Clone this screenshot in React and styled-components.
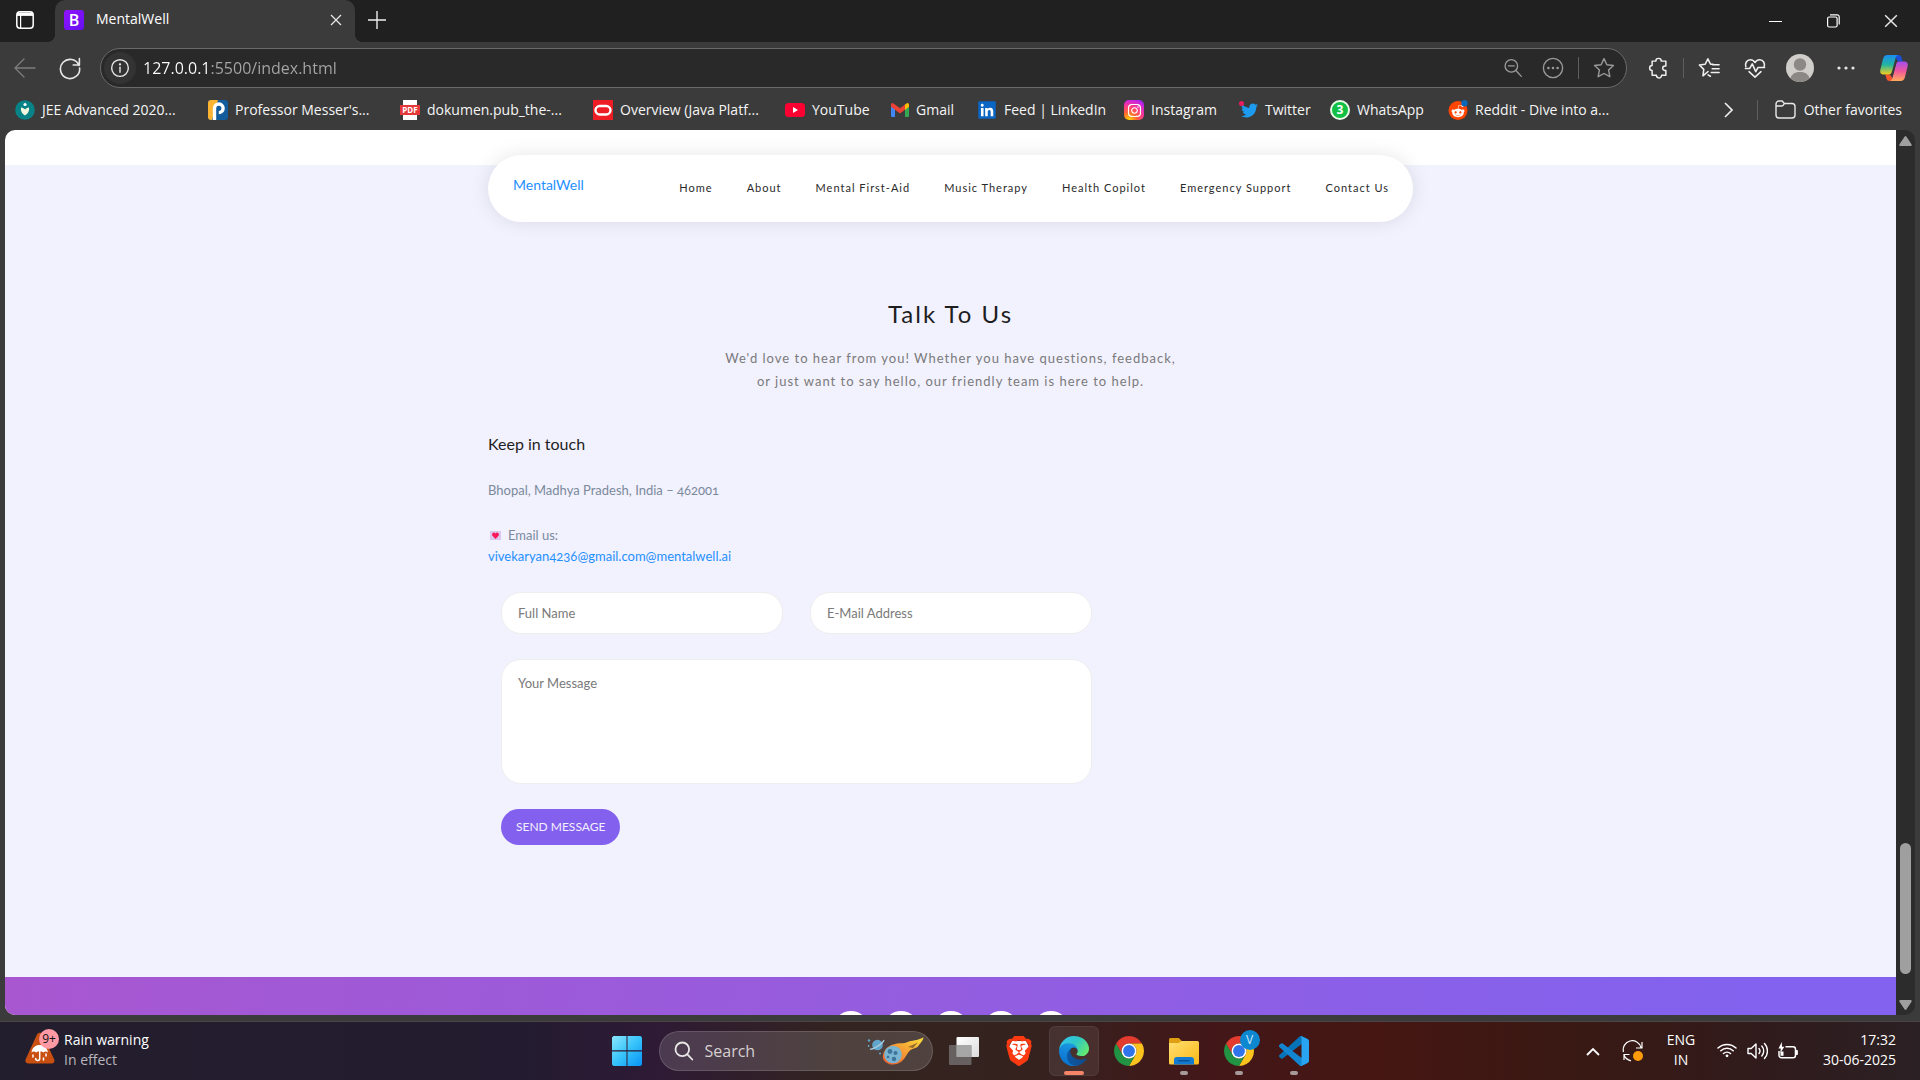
import React from "react";
import styled, { createGlobalStyle, css } from "styled-components";
import { SiBrave } from "react-icons/si";
import { FaTwitter, FaLinkedin, FaInstagram, FaRedditAlien } from "react-icons/fa";

const ui = `"Open Sans", "Noto Sans", sans-serif`;
const site = `Lato, "Open Sans", sans-serif`;

const GlobalStyle = createGlobalStyle`
  *, *::before, *::after { box-sizing: border-box; }
  body { margin: 0; background: #3b3b3b; font-family: ${ui}; }
  button { border: 0; padding: 0; background: none; color: inherit; font: inherit; cursor: pointer; }
  a { text-decoration: none; }
  h1, h2, h3, p, ul { margin: 0; padding: 0; font-weight: 400; list-style: none; }
  svg { display: block; flex: none; }
`;

const Desktop = styled.div`
  display: flex;
  flex-direction: column;
  height: 100vh;
  overflow: hidden;
`;

/* ---------- Browser chrome ---------- */

const TitleBar = styled.header`
  display: flex;
  align-items: flex-start;
  height: 42px;
  background: #202020;
  color: #fff;
`;

const TabActions = styled.button`
  display: grid;
  place-items: center;
  width: 55px;
  height: 40px;
  padding-right: 5px;
`;

const Tab = styled.div`
  display: flex;
  align-items: center;
  gap: 12px;
  width: 300px;
  height: 42px;
  padding: 0 9px 2px 9px;
  background: #3b3b3b;
  border-radius: 10px 10px 0 0;
  font-size: 14px;
  line-height: 20px;
  position: relative;

  &::before,
  &::after {
    content: "";
    position: absolute;
    bottom: 0;
    width: 8px;
    height: 8px;
  }
  &::before {
    right: 100%;
    background: radial-gradient(circle at 0 0, #202020 8px, #3b3b3b 8px);
  }
  &::after {
    left: 100%;
    background: radial-gradient(circle at 100% 0, #202020 8px, #3b3b3b 8px);
  }
`;

const Favicon = styled.span`
  display: grid;
  place-items: center;
  width: 20px;
  height: 20px;
  border-radius: 3px;
  background: linear-gradient(135deg, #9013fe, #6610f2);
  color: #fff;
  font: 600 16px/20px ${ui};
`;

const TabTitle = styled.span`
  flex: 1;
  padding-bottom: 2px;
`;

const IconButton = styled.button`
  display: grid;
  place-items: center;
  width: ${(p) => p.$w || 20}px;
  height: ${(p) => p.$h || 28}px;
  color: ${(p) => p.$color || "#e6e6e6"};
`;

const WindowControls = styled.div`
  display: flex;
  margin-left: auto;
`;

const Toolbar = styled.div`
  display: flex;
  align-items: center;
  height: 52px;
  padding: 0 2px 0 11px;
  background: #3b3b3b;
`;

const AddressBar = styled.form`
  display: flex;
  align-items: center;
  flex: 1;
  height: 40px;
  margin-right: 8px;
  padding: 0 2px 0 3px;
  border: 1px solid #6a6a6a;
  border-radius: 20px;
  background: #292929;
`;

const SiteInfo = styled.button`
  display: grid;
  place-items: center;
  width: 32px;
  height: 32px;
  border-radius: 50%;
  background: #333;
  color: #e6e6e6;
`;

const Url = styled.input`
  flex: 1;
  min-width: 0;
  margin-left: 7px;
  padding: 0;
  border: 0;
  outline: 0;
  font: 16px/24px ${ui};
  color: transparent;
  background: linear-gradient(90deg, #fff 67px, #a6a6a6 67px);
  background-clip: text;
  -webkit-background-clip: text;
`;

const Divider = styled.span`
  width: 1px;
  height: ${(p) => p.$h || 20}px;
  margin: 0 ${(p) => p.$m || 0}px;
  background: #5e5e5e;
`;

const Avatar = styled.button`
  width: 28px;
  height: 28px;
  margin: 0 8px 0 10px;
`;

const Bookmarks = styled.nav`
  display: flex;
  align-items: center;
  height: 36px;
  padding: 0 18px 4px 15px;
  background: #3b3b3b;
  color: #f5f5f5;
  font-size: 14px;
  line-height: 20px;
`;

const BookmarkList = styled.ul`
  display: flex;
  flex: 1;
  min-width: 0;
  gap: 21px;
`;

const Bookmark = styled.a`
  display: flex;
  align-items: center;
  gap: 7px;
  width: ${(p) => p.$w}px;
  color: inherit;
  white-space: nowrap;
`;

const Badge = styled.span`
  display: grid;
  place-items: center;
  width: 20px;
  height: 20px;
  flex: none;
  border-radius: ${(p) => p.$r || "3px"};
  border: ${(p) => p.$ring || 0};
  background: ${(p) => p.$bg};
  color: #fff;
  font-weight: 700;
  font-size: 12px;
  line-height: 1;
`;

const LinkedInMark = styled(FaLinkedin)`
  width: 20px;
  height: 20px;
  color: #0a66c2;
  background: linear-gradient(#fff, #fff) center / 14px 14px no-repeat;
`;

const PdfIcon = styled.span`
  display: grid;
  align-items: center;
  width: 20px;
  height: 20px;
  flex: none;
  background: linear-gradient(#fff, #fff) center / 14px 20px no-repeat;
  span {
    background: #e5383b;
    color: #fff;
    font: 700 8px/10px ${ui};
    text-align: center;
  }
`;

const OtherFavorites = styled.a`
  display: flex;
  align-items: center;
  gap: 8px;
  padding-left: 9px;
  color: inherit;
`;

/* ---------- Page viewport ---------- */

const Viewport = styled.div`
  display: flex;
  flex: 1;
  min-height: 0;
  margin: 0 5px 6px;
  border-radius: 10px;
  overflow: hidden;
  background: #2c2c2c;
`;

const Page = styled.div`
  flex: 1;
  min-width: 0;
  position: relative;
  overflow: hidden;
  background: #fff;
  font-family: ${site};
  font-size: 14px;
`;

const SiteHeader = styled.header`
  position: absolute;
  top: 25px;
  left: 0;
  right: 0;
  display: flex;
  align-items: center;
  justify-content: space-between;
  width: 925px;
  height: 67px;
  margin: 0 auto;
  padding: 0 24px 2px 25px;
  border-radius: 34px;
  background: #fff;
  box-shadow: 0 0 20px rgba(0, 0, 0, 0.1);
`;

const Brand = styled.a`
  padding-bottom: 6px;
  color: #1e90ff;
  font-size: 14px;
  line-height: 20px;
`;

const Menu = styled.ul`
  display: flex;
  gap: 34px;
`;

const MenuLink = styled.a`
  color: #2a2a2a;
  font-size: 11px;
  line-height: 20px;
  letter-spacing: 1px;
`;

const Contact = styled.main`
  margin-top: 35px;
  padding: 132px 0;
  background: #f2f1fe;
`;

const Container = styled.div`
  width: 925px;
  margin: 0 auto;
`;

const Intro = styled.div`
  text-align: center;
  h2 {
    color: #1e1e1e;
    font-size: 24px;
    line-height: 34px;
    letter-spacing: 2px;
  }
  p {
    margin-top: 16px;
    color: #7a7a7a;
    font-size: 13px;
    line-height: 23px;
    letter-spacing: 1px;
  }
`;

const Details = styled.div`
  margin-top: 39px;
  color: #7a8a9c;
  font-size: 13px;
  line-height: 21px;
  h3 {
    color: #1e1e1e;
    font-size: 16px;
    line-height: 24px;
  }
  p {
    margin-top: 24px;
    font-variant-numeric: oldstyle-nums;
  }
  a {
    color: #1e90ff;
  }
`;

const MailLine = styled.span`
  display: flex;
  align-items: center;
  gap: 7px;
  padding-left: 2px;
`;

const Form = styled.form`
  display: grid;
  grid-template-columns: 1fr 1fr;
  gap: 25px 27px;
  width: 591px;
  margin: 25px 0 0 13px;
`;

const fieldStyle = css`
  width: 100%;
  border: 1px solid #eee;
  border-radius: 20px;
  outline: 0;
  background: #fff;
  color: #333;
  font: 13px/18px ${site};
  &::placeholder {
    color: #7a7a7a;
    opacity: 1;
  }
`;

const Field = styled.input`
  ${fieldStyle}
  height: 42px;
  padding: 0 16px;
`;

const Message = styled.textarea`
  ${fieldStyle}
  grid-column: 1 / -1;
  display: block;
  height: 125px;
  padding: 14px 16px;
  resize: none;
`;

const Submit = styled.button`
  justify-self: start;
  height: 36px;
  padding: 0 15px 2px;
  border-radius: 18px;
  background: #8360ee;
  color: #f3effd;
  font-size: 12px;
  text-transform: uppercase;
`;

const Footer = styled.footer`
  display: flex;
  justify-content: center;
  gap: 14px;
  padding: 34px 0;
  background: linear-gradient(100deg, #a857d0 0%, #8262ee 92%);
`;

const SocialLink = styled.a`
  width: 36px;
  height: 36px;
  border-radius: 50%;
  background: #fff;
`;

const Scrollbar = styled.div`
  display: flex;
  flex-direction: column;
  align-items: center;
  width: 19px;
  padding: 6px 0 5px;
`;

const Thumb = styled.div`
  width: 11px;
  height: 131px;
  margin: auto 0 26px;
  border-radius: 6px;
  background: #9f9f9f;
`;

/* ---------- Taskbar ---------- */

const Taskbar = styled.footer`
  display: grid;
  grid-template-columns: 1fr auto 1fr;
  align-items: center;
  height: 59px;
  border-top: 1px solid #4b4446;
  background: linear-gradient(
    90deg,
    #231e2d 0%,
    #231c30 27%,
    #2e1a35 34%,
    #33241f 44%,
    #35221f 54%,
    #431719 63%,
    #451612 72%,
    #381914 83%,
    #301b1c 92%,
    #2b2024 100%
  );
  color: #fff;
  font-size: 14px;
  line-height: 20px;
`;

const Weather = styled.button`
  display: flex;
  align-items: center;
  gap: 6px;
  padding: 0 0 2px 25px;
  justify-self: start;
  text-align: left;
  small {
    display: block;
    color: #b9b6bb;
    font-size: 14px;
  }
`;

const WeatherIcon = styled.span`
  position: relative;
  width: 33px;
  height: 36px;
  padding-top: 2px;
  margin-bottom: 6px;
`;

const Count = styled.span`
  position: absolute;
  top: 0;
  right: -1px;
  width: 20px;
  height: 20px;
  border-radius: 50%;
  background: #ff99a4;
  color: #111;
  font-size: 12px;
  text-align: center;
`;

const Apps = styled.div`
  display: flex;
  align-items: center;
  gap: 5px;
`;

const AppButton = styled.button`
  position: relative;
  display: grid;
  place-items: center;
  width: 50px;
  height: 50px;
  border-radius: 6px;
  ${(p) =>
    p.$active &&
    css`
      background: rgba(255, 255, 255, 0.08);
      box-shadow: inset 0 0 0 1px rgba(255, 255, 255, 0.06);
    `}
  &::after {
    content: "";
    display: ${(p) => (p.$active || p.$open ? "block" : "none")};
    position: absolute;
    bottom: 1px;
    width: ${(p) => (p.$active ? 20 : 8)}px;
    height: 4px;
    border-radius: 2px;
    background: ${(p) => (p.$active ? "#f58469" : "#a79a9b")};
  }
`;

const ProfileBadge = styled.span`
  position: absolute;
  top: 4px;
  right: 4px;
  width: 20px;
  height: 20px;
  border-radius: 50%;
  background: #0d87cf;
  color: #cfe9fb;
  font-size: 12px;
  text-align: center;
`;

const SearchBox = styled.label`
  display: flex;
  align-items: center;
  width: 274px;
  height: 40px;
  margin: 0 1px 0 2px;
  padding: 0 8px 0 14px;
  border: 1px solid rgba(255, 255, 255, 0.14);
  border-radius: 20px;
  background: rgba(255, 255, 255, 0.14);
  input {
    flex: 1;
    min-width: 0;
    margin-left: 11px;
    padding: 0;
    border: 0;
    outline: 0;
    background: none;
    color: #fff;
    font: 16px/24px ${ui};
  }
  input::placeholder {
    color: #d6d0d1;
    opacity: 1;
  }
`;

const Tray = styled.div`
  display: flex;
  align-items: center;
  justify-self: end;
  padding-right: 24px;
`;

const Language = styled.button`
  width: 40px;
  margin: 0 16px 0 8px;
  padding-bottom: 2px;
  text-align: center;
`;

const Status = styled.button`
  display: flex;
  gap: 10px;
`;

const Clock = styled.button`
  width: 98px;
  padding-bottom: 2px;
  text-align: right;
  white-space: nowrap;
`;

/* ---------- Drawings ---------- */

const Line = ({ s = 24, w = 1.5, children }) => (
  <svg width={s} height={s} viewBox="0 0 24 24" fill="none" stroke="currentColor" strokeWidth={w} strokeLinecap="round" strokeLinejoin="round">
    {children}
  </svg>
);

const TabActionsIcon = () => (
  <svg width="20" height="20" viewBox="0 0 20 20" fill="none" stroke="#fff" strokeWidth="1.5">
    <rect x="1.8" y="1.8" width="16.4" height="16.4" rx="3.2" />
    <path d="M2 4.2h16" strokeWidth="3.4" />
    <path d="M5.6 5v13" strokeWidth="1.2" />
  </svg>
);
const CloseIcon = ({ s = 12 }) => (
  <svg width={s} height={s} viewBox="0 0 12 12" stroke="currentColor" strokeWidth="1.3"><path d="M1 1l10 10M11 1L1 11" /></svg>
);
const PlusIcon = () => (
  <svg width="18" height="18" viewBox="0 0 18 18" stroke="#eee" strokeWidth="1.4"><path d="M9 0v18M0 9h18" /></svg>
);
const BackIcon = () => <Line s={24} w={1.3}><path d="M22 12H2.5M11 3l-9 9 9 9" /></Line>;
const ReloadIcon = () => <Line s={24} w={1.6}><path d="M21 9.5A9.6 9.6 0 1 0 21.6 12M21.4 2.6V9h-6.2" /></Line>;
const InfoIcon = () => (
  <Line s={20} w={1.7}><circle cx="12" cy="12" r="10" /><path d="M12 11v6" /><circle cx="12" cy="7.6" r=".6" fill="currentColor" /></Line>
);
const ZoomOutIcon = () => <Line s={20} w={1.6}><circle cx="10" cy="9.5" r="7.5" /><path d="M15.5 15l6.5 7M6.5 9.5h7" /></Line>;
const DotsCircleIcon = () => (
  <Line s={22} w={1.5}><circle cx="12" cy="12" r="10.5" /><g fill="currentColor" stroke="none"><circle cx="7" cy="12" r="1.4" /><circle cx="12" cy="12" r="1.4" /><circle cx="17" cy="12" r="1.4" /></g></Line>
);
const StarIcon = () => <Line s={22} w={1.5}><path d="M12 1.8l3.1 6.6 7.2.9-5.3 5 1.4 7.2L12 18l-6.400 3.500L7 14.300l-5.300-5 7.200-.9z" /></Line>;
const PuzzleIcon = () => (
  <Line s={22} w={1.6}><path d="M8.500 4.500a3 3 0 0 1 6 0H19.500V9.700h-1a2.500 2.500 0 0 0 0 5H19.500V20h-4.700a2.800 2.800 0 0 1-5.600 0H4.500v-5.300a2.700 2.700 0 0 1 0-5.400V4.500z" /></Line>
);
const FavoritesIcon = () => (
  <Line s={22} w={1.7}><path d="M11 15.800l-5.600 4.700.9-7L1.500 8.800l6.300-.9L10.800 2l2.900 5.900h2.800M16 8.500h7M15.500 12.800h7.500M14.500 17h8.500M13.500 21l-2.500-1.500" /></Line>
);
const HeartIcon = () => (
  <Line s={22} w={1.7}><path d="M2 10.500C.8 7 3 3 6.800 3 9.500 3 11 4.500 12 6c1-1.500 2.500-3 5.200-3C21 3 23.200 7 22 10.500M1.500 12.500h4.800l2.700-5 3.800 8.500 2.400-4.500h7.300M5.500 16l6.500 6 6.500-6" /></Line>
);
const MoreIcon = () => (
  <svg width="18" height="6" viewBox="0 0 18 6" fill="#e6e6e6"><circle cx="2" cy="3" r="1.600" /><circle cx="9" cy="3" r="1.600" /><circle cx="16" cy="3" r="1.600" /></svg>
);
const AvatarIcon = () => (
  <svg width="28" height="28" viewBox="0 0 28 28">
    <circle cx="14" cy="14" r="14" fill="#d0cecb" />
    <circle cx="14" cy="10.500" r="6.200" fill="#8b8885" />
    <path d="M4.500 24.200C6 19.500 9.500 18 14 18s8 1.500 9.500 6.200A14 14 0 0 1 4.500 24.200z" fill="#8b8885" />
  </svg>
);
const CopilotIcon = () => (
  <svg width="28" height="28" viewBox="0 0 28 28">
    <defs>
      <linearGradient id="cpA" x1="0" y1="0" x2="0" y2="1"><stop offset="0" stopColor="#1b8df2" /><stop offset=".5" stopColor="#21b5a0" /><stop offset="1" stopColor="#f5d01c" /></linearGradient>
      <linearGradient id="cpB" x1="0" y1="0" x2="0" y2="1"><stop offset="0" stopColor="#a44df0" /><stop offset=".5" stopColor="#f0589a" /><stop offset="1" stopColor="#ffab5c" /></linearGradient>
    </defs>
    <path d="M14 1h4.500c2 0 2.700 1.300 3.200 3l1 3.500H18z" fill="#1c4fd6" />
    <path d="M14 27H9.500c-2 0-2.700-1.300-3.200-3l-1-3.500H10z" fill="#f4552d" />
    <path d="M7.500 1H18c-1.500.5-2.200 2-2.700 4l-3.500 13c-.6 1.700-1.500 2.500-3.300 2.500H3.500C.8 20.500-.3 18.500.4 15.500L3 5C3.700 2.300 5 1 7.500 1z" fill="url(#cpA)" />
    <path d="M20.500 27H10c1.500-.5 2.200-2 2.700-4l3.500-13c.6-1.700 1.500-2.500 3.300-2.500h5c2.700 0 3.800 2 3.100 5L25 23c-.7 2.700-2 4-4.500 4z" fill="url(#cpB)" />
    <path d="M16 10l-3 11h-1.200l3-11z" fill="#3b3b3b" />
  </svg>
);
const OracleIcon = () => (
  <svg width="20" height="20" viewBox="0 0 20 20"><rect width="20" height="20" fill="#ee1c24" /><rect x="2.500" y="6" width="15" height="8.500" rx="4.250" fill="none" stroke="#fff" strokeWidth="2.400" /></svg>
);
const JeeIcon = () => (
  <svg width="20" height="20" viewBox="0 0 20 20"><circle cx="10" cy="10" r="9.800" fill="#078287" /><circle cx="10" cy="4.500" r="1.600" fill="#fff" /><path d="M6 7.500c2 .3 3 .8 4 2 1-1.200 2-1.700 4-2 .5 4-1.200 6-4 8-2.800-2-4.500-4-4-8z" fill="#f3f6df" /></svg>
);
const ProfessorIcon = () => (
  <svg width="20" height="20" viewBox="0 0 20 20">
    <rect width="20" height="20" rx="3" fill="#125c9e" /><path d="M3 0h7L4 20H3a3 3 0 0 1-3-3V3a3 3 0 0 1 3-3z" fill="#fbb331" />
    <path d="M6.500 20V8a4.300 4.300 0 1 1 4.300 4.600" fill="none" stroke="#fff" strokeWidth="3.400" />
  </svg>
);
const YoutubeIcon = () => (
  <svg width="20" height="14" viewBox="0 0 20 14"><rect width="20" height="14" rx="3.500" fill="#ff0033" /><path d="M8 4l5 3-5 3z" fill="#fff" /></svg>
);
const GmailIcon = () => (
  <svg width="18" height="14" viewBox="0 0 18 14"><path d="M0 2v11a1 1 0 0 0 1 1h3V5z" fill="#4285f4" /><path d="M18 2v11a1 1 0 0 1-1 1h-3V5z" fill="#34a853" /><path d="M14 1.500L16 .3c1-.6 2 .2 2 1.500v2L14 7z" fill="#fbbc04" /><path d="M4 1.500L2 .3C1-.3 0 .5 0 1.800v2L9 10.500l5-3.700V1.500L9 5.300z" fill="#ea4335" /></svg>
);
const TwitterIcon = () => (
  <svg width="19" height="20" viewBox="0 0 19 20"><FaTwitter x="2" y="2" size={17} color="#1d9bf0" /><circle cx="2.500" cy="3.500" r="2.500" fill="#e81c62" /></svg>
);
const RedditIcon = () => (
  <svg width="20" height="20" viewBox="0 0 20 20"><circle cx="10" cy="10.500" r="9.500" fill="#ff4500" /><FaRedditAlien x="3" y="4" size={14} color="#fff" /><circle cx="16.500" cy="3.200" r="3.200" fill="#0b66b8" /></svg>
);
const FolderIcon = () => (
  <svg width="21" height="20" viewBox="0 0 21 20" fill="none" stroke="#e8e8e8" strokeWidth="1.400"><path d="M1 6V4a3 3 0 0 1 3-3h3.200l2.200 2.500H17a3 3 0 0 1 3 3V15a3 3 0 0 1-3 3H4a3 3 0 0 1-3-3zM1 6h5.800c1.200 0 1.400-.6 2.600-2.500" /></svg>
);
const LoveLetterIcon = () => (
  <svg width="11" height="9" viewBox="0 0 11 9"><rect width="11" height="9" fill="#dcc8ef" /><path d="M5.500 8L2.200 4.500C1.300 2.500 4 .3 5.500 2.500 7 .3 9.700 2.500 8.800 4.500z" fill="#f8185b" /></svg>
);
const RainIcon = () => (
  <svg width="30" height="33" viewBox="0 0 30 33">
    <path d="M12 3.500c1.300-2.300 4.300-2.300 5.500 0L29 28c1.200 2.500 0 4.500-2.500 4.500h-23C.8 32.500-.3 30.500.8 28z" fill="#c84f10" />
    <path d="M6.500 21.500c.5-5 4-7.500 8.200-7.500s7.700 2.500 8.200 7.500c-1.500-1.500-3.200-1.500-4.400 0-2.500-1.600-5-1.600-7.500 0-1.200-1.500-3-1.500-4.500 0z" fill="#fff" />
    <path d="M14.700 20v7.500a2 2 0 0 1-4 0M8 24v2M21 23v2M18.500 27v2" stroke="#fff" strokeWidth="1.500" fill="none" strokeLinecap="round" />
  </svg>
);
const WindowsIcon = () => (
  <svg width="30" height="30" viewBox="0 0 30 30">
    <defs><linearGradient id="win" x1="0" y1="0" x2="1" y2="1"><stop offset="0" stopColor="#8be6fd" /><stop offset=".5" stopColor="#37c3fa" /><stop offset="1" stopColor="#0793f5" /></linearGradient></defs>
    <path fill="url(#win)" d="M1.500 0h13v14.300H0V1.500zM15.500 0h13L30 1.500v12.800H15.500zM0 15.500h14.500V30h-13L0 28.500zM15.500 15.500H30v13L28.500 30h-13z" />
  </svg>
);
const SearchIcon = () => (
  <svg width="20" height="20" viewBox="0 0 20 20" fill="none" stroke="#e9e6e6" strokeWidth="1.800" strokeLinecap="round"><circle cx="8.300" cy="8.300" r="6.800" /><path d="M13.300 13.300l5 5.200" /></svg>
);
const CometIcon = () => (
  <svg width="57" height="28" viewBox="0 0 57 28">
    <defs><linearGradient id="cm" x1="0" y1="1" x2="1" y2="0"><stop offset="0" stopColor="#f0592c" /><stop offset=".5" stopColor="#f59c35" /><stop offset="1" stopColor="#fbe13a" /></linearGradient></defs>
    <circle cx="10.500" cy="8" r="5.300" fill="#62a5cc" /><path d="M3 12C5 13 16 7 17 3" stroke="#a8cde0" fill="none" strokeWidth="1.200" />
    <g fill="#62a5cc"><circle cx="2" cy="3.500" r="1.200" /><circle cx="1.600" cy="9" r=".9" /><circle cx="13" cy="16.500" r="1" /></g>
    <path d="M17 15c3-6 8-7.500 13-8.500 4-.8 7 .3 10-1.300 5-2.200 10-1 16.500-4.900-.5 4-4 6.500-5.500 9.200-1.500 1.700-5 1.700-7.500 3.500-3 2-4.500 8-9 11.500-5 4-12 4-16 .5-3-2.500-3.500-6-1.500-10z" fill="url(#cm)" />
    <path d="M41 10l10-4.500-5 5.500z" fill="#6c4a2b" opacity=".7" />
    <circle cx="26" cy="17.500" r="8.800" fill="#79b4d2" /><g fill="#3e7499"><circle cx="23" cy="14.500" r="2.400" /><circle cx="28.500" cy="16" r="2" /><circle cx="27" cy="22" r="2.200" /><circle cx="21" cy="20" r="1.300" /></g>
  </svg>
);
const TaskViewIcon = () => (
  <svg width="30" height="28" viewBox="0 0 30 28">
    <defs><linearGradient id="tv" x1="0" y1="0" x2="1" y2="1"><stop offset="0" stopColor="#fff" /><stop offset="1" stopColor="#dcdcdc" /></linearGradient></defs>
    <rect x="7.500" y="0" width="22.500" height="20" rx="1" fill="url(#tv)" /><rect x="0" y="8" width="22.500" height="20" rx="1" fill="#777" opacity=".75" />
    <rect x="7.500" y="8" width="15" height="12" fill="#aaa" opacity=".8" />
  </svg>
);
const BraveIcon = () => (
  <svg width="30" height="30" viewBox="0 0 30 30"><path d="M8 5h14l3 6-3 12-7 5-7-5-3-12z" fill="#fff" /><SiBrave size={30} color="#fb3a12" /></svg>
);
const EdgeIcon = () => (
  <svg width="30" height="30" viewBox="4.600 4.800 256 254">
    <defs>
      <linearGradient id="e1" x1="0" y1="0" x2="1" y2="0"><stop offset="0" stopColor="#0c59a4" /><stop offset="1" stopColor="#114a8b" /></linearGradient>
      <linearGradient id="e2" x1=".6" y1="0" x2=".3" y2="1"><stop offset="0" stopColor="#1b9de2" /><stop offset=".5" stopColor="#1383d9" /><stop offset="1" stopColor="#0570cc" /></linearGradient>
      <linearGradient id="e3" x1="0" y1=".2" x2="1" y2=".7"><stop offset="0" stopColor="#35c1f1" /><stop offset=".5" stopColor="#2fc8c4" /><stop offset="1" stopColor="#66eb6e" /></linearGradient>
    </defs>
    <path fill="url(#e1)" d="M235.680 195.460a93.730 93.730 0 0 1-10.540 4.710 101.870 101.870 0 0 1-35.900 6.460c-47.320 0-88.540-32.550-88.540-74.320A31.480 31.480 0 0 1 117.130 105c-42.800 1.800-53.800 46.400-53.800 72.530 0 73.880 68.090 81.370 82.760 81.370 7.910 0 19.840-2.300 27-4.560l1.310-.44a128.340 128.340 0 0 0 66.600-52.800 4 4 0 0 0-5.320-5.640z" />
    <path fill="url(#e2)" d="M110.340 246.340A79.200 79.200 0 0 1 87.600 225a80.720 80.720 0 0 1 29.530-120c3.120-1.470 8.450-4.130 15.540-4a32.350 32.350 0 0 1 25.690 13 31.880 31.880 0 0 1 6.360 18.660c0-.21 24.460-79.600-80-79.600-43.900 0-80 41.660-80 78.210a130.150 130.150 0 0 0 12.110 56 128 128 0 0 0 156.380 67.110 75.550 75.550 0 0 1-62.780-8z" />
    <path fill="url(#e3)" d="M156.940 153.780c-.81 1.050-3.300 2.500-3.300 5.660 0 2.610 1.700 5.120 4.720 7.230 14.380 10 41.490 8.680 41.560 8.680a59.560 59.560 0 0 0 30.270-8.350 61.380 61.380 0 0 0 30.430-52.880c.26-22.410-8-37.310-11.340-43.910C228.090 28.760 182.350 4.810 132.610 4.810a128 128 0 0 0-128 126.200c.48-36.540 36.800-66.050 80-66.050 3.500 0 23.460.34 42 10.070 16.340 8.580 24.900 18.940 30.850 29.210 6.180 10.670 7.280 24.150 7.280 29.520s-2.740 13.330-7.800 20.020z" />
  </svg>
);
const ChromeIcon = () => (
  <svg width="30" height="30" viewBox="0 0 48 48">
    <path fill="#e33b2e" d="M24 12H44.780A24 24 0 0 0 3.220 12L13.610 30A12 12 0 0 1 24 12z" />
    <path fill="#fcc31e" d="M34.390 30L24 48A24 24 0 0 0 44.780 12H24A12 12 0 0 1 34.390 30z" />
    <path fill="#229342" d="M13.610 30L3.220 12A24 24 0 0 0 24 48L34.390 30A12 12 0 0 1 13.610 30z" />
    <circle cx="24" cy="24" r="12" fill="#fff" /><circle cx="24" cy="24" r="9.500" fill="#2f74ea" />
  </svg>
);
const ExplorerIcon = () => (
  <svg width="30" height="27" viewBox="0 0 30 27">
    <defs><linearGradient id="fx" x1="0" y1="0" x2="1" y2="1"><stop offset="0" stopColor="#ffdf71" /><stop offset="1" stopColor="#fbb917" /></linearGradient></defs>
    <path d="M0 1.500A1.500 1.500 0 0 1 1.500 0h8.300l3 3v4H0z" fill="#e09f12" /><path d="M0 5h9.500l3-2h16A1.500 1.500 0 0 1 30 4.500V25a1.500 1.500 0 0 1-1.500 1.500h-27A1.500 1.500 0 0 1 0 25z" fill="url(#fx)" />
    <path d="M5 26.500V22a3 3 0 0 1 3-3h14a3 3 0 0 1 3 3v4.500z" fill="#117bd4" /><path d="M9.500 22.800h11" stroke="#0b4a87" strokeWidth="1.300" />
  </svg>
);
const CodeIcon = () => (
  <svg width="30" height="30" viewBox="0 0 100 100">
    <path fill="#0673b8" d="M96.460 10.800L75.860.88a6.200 6.200 0 0 0-7.100 1.200L1.300 63.600a4.170 4.170 0 0 0 0 6.160l5.500 5a4.160 4.160 0 0 0 5.300.24L93.360 13.300A4.130 4.130 0 0 1 100 16.670v-.24a6.250 6.250 0 0 0-3.540-5.630z" />
    <path fill="#1286d0" d="M96.460 89.200L75.860 99.120a6.230 6.230 0 0 1-7.100-1.200L1.300 36.400a4.170 4.170 0 0 1 0-6.160l5.500-5a4.160 4.160 0 0 1 5.300-.24L93.360 86.700A4.130 4.130 0 0 0 100 83.330v.24a6.250 6.250 0 0 1-3.540 5.630z" />
    <path fill="#28a4f0" d="M75.860 99.130a6.230 6.230 0 0 1-7.100-1.210A3.660 3.660 0 0 0 75 95.330V4.670a3.660 3.660 0 0 0-6.240-2.590 6.230 6.230 0 0 1 7.100-1.210l20.600 9.910A6.250 6.250 0 0 1 100 16.410v67.180a6.250 6.250 0 0 1-3.540 5.630z" />
  </svg>
);
const SyncIcon = () => (
  <svg width="22" height="22" viewBox="0 0 22 22" fill="none" stroke="#fff" strokeWidth="1.200"><path d="M1.500 12a9 9 0 0 1 17.500-4.500M20 2v6h-6M2 20v-5.500h5.500M2 14.800C3 18 5.500 20 9 20.800" /><circle cx="16" cy="16" r="5" fill="#ff9a0a" stroke="none" /></svg>
);
const WifiIcon = () => (
  <svg width="20" height="16" viewBox="0 0 20 16" fill="none" stroke="#fff" strokeWidth="1.500" strokeLinecap="round"><path d="M1 6a13 13 0 0 1 18 0M3.800 8.800a9 9 0 0 1 12.400 0M6.500 11.500a5.200 5.200 0 0 1 7 0" /><circle cx="10" cy="13.800" r="1.400" fill="#fff" stroke="none" /></svg>
);
const VolumeIcon = () => (
  <svg width="21" height="18" viewBox="0 0 21 18" fill="none" stroke="#fff" strokeWidth="1.400" strokeLinecap="round" strokeLinejoin="round"><path d="M1 6.500h3.200L9 2v14l-4.800-4.500H1zM12 6.500a4 4 0 0 1 0 5M14.800 4a7.500 7.500 0 0 1 0 10M17.500 1.500a11 11 0 0 1 0 15" /></svg>
);
const BatteryIcon = () => (
  <svg width="20" height="18" viewBox="0 0 20 18" fill="none" stroke="#fff" strokeWidth="1.500"><path d="M7.500 4.700H15a2.500 2.500 0 0 1 2.500 2.500v6a2.500 2.500 0 0 1-2.500 2.500H3.500A2.500 2.500 0 0 1 1 13.200V9" /><path d="M18 8.500h1.500v4H18z" fill="#fff" strokeWidth=".8" /><path d="M3.800 0L.5 6.500h2.300L2.300 11 6.300 4.800H4z" fill="#fff" stroke="none" /><path d="M2.500 9.500h3v4.300h-3z" fill="#fff" stroke="none" /></svg>
);

/* ---------- Data ---------- */

const bookmarks = [
  { label: "JEE Advanced 2020...", w: 172, icon: <JeeIcon /> },
  { label: "Professor Messer's...", w: 171, icon: <ProfessorIcon /> },
  { label: "dokumen.pub_the-...", w: 172, icon: <PdfIcon><span>PDF</span></PdfIcon> },
  { label: "Overview (Java Platf...", w: 171, icon: <OracleIcon /> },
  { label: "YouTube", w: 85, icon: <YoutubeIcon /> },
  { label: "Gmail", w: 65, icon: <GmailIcon /> },
  { label: "Feed | LinkedIn", w: 126, icon: <LinkedInMark /> },
  {
    label: "Instagram", w: 94,
    icon: <Badge $bg="radial-gradient(circle at 25% 100%, #ffd600 0%, #ff6930 30%, #fe3b88 55%, #c724e0 80%, #7a2bff 100%)" $r="5px"><FaInstagram size={15} /></Badge>,
  },
  { label: "Twitter", w: 70, icon: <TwitterIcon /> },
  { label: "WhatsApp", w: 97, icon: <Badge $bg="#11c044" $r="50%" $ring="2px solid #eafbe9">3</Badge> },
  { label: "Reddit - Dive into a...", w: 172, icon: <RedditIcon /> },
];

const menu = ["Home", "About", "Mental First-Aid", "Music Therapy", "Health Copilot", "Emergency Support", "Contact Us"];
const socials = ["Facebook", "Twitter", "LinkedIn", "Instagram", "YouTube"];

export default function App() {
  return (
    <Desktop>
      <GlobalStyle />
      <TitleBar>
        <TabActions aria-label="Tab actions"><TabActionsIcon /></TabActions>
        <Tab>
          <Favicon>B</Favicon>
          <TabTitle>MentalWell</TabTitle>
          <IconButton aria-label="Close tab"><CloseIcon /></IconButton>
        </Tab>
        <IconButton $w={44} $h={40} aria-label="New tab"><PlusIcon /></IconButton>
        <WindowControls>
          <IconButton $w={58} $h={42} aria-label="Minimize"><svg width="13" height="13" viewBox="0 0 13 13"><path d="M0 6.500h13" stroke="#fff" /></svg></IconButton>
          <IconButton $w={58} $h={42} aria-label="Restore">
            <svg width="13" height="14" viewBox="0 0 13 14" fill="none" stroke="#fff" strokeWidth="1.200"><rect x=".6" y="3" width="9.500" height="10" rx="1.500" /><path d="M3 .8h7a2 2 0 0 1 2.200 2.200v7.500" /></svg>
          </IconButton>
          <IconButton $w={58} $h={42} aria-label="Close"><CloseIcon s={14} /></IconButton>
        </WindowControls>
      </TitleBar>

      <Toolbar>
        <IconButton $w={28} $color="#7d7d7d" aria-label="Back"><BackIcon /></IconButton>
        <IconButton $w={61} aria-label="Reload"><ReloadIcon /></IconButton>
        <AddressBar>
          <SiteInfo type="button" aria-label="Site information"><InfoIcon /></SiteInfo>
          <Url aria-label="Address" defaultValue="127.0.0.1:5500/index.html" />
          <IconButton type="button" $w={40} $color="#9a9a9a" aria-label="Zoom out"><ZoomOutIcon /></IconButton>
          <IconButton type="button" $w={40} $color="#9a9a9a" aria-label="Site actions"><DotsCircleIcon /></IconButton>
          <Divider $h={22} $m={5} />
          <IconButton type="button" $w={40} $color="#9a9a9a" aria-label="Add to favorites"><StarIcon /></IconButton>
        </AddressBar>
        <IconButton $w={48} $color="#f0f0f0" aria-label="Extensions"><PuzzleIcon /></IconButton>
        <Divider />
        <IconButton $w={50} $color="#f0f0f0" aria-label="Favorites"><FavoritesIcon /></IconButton>
        <IconButton $w={42} $color="#f0f0f0" aria-label="Browser essentials"><HeartIcon /></IconButton>
        <Avatar aria-label="Profile"><AvatarIcon /></Avatar>
        <IconButton $w={48} aria-label="More"><MoreIcon /></IconButton>
        <IconButton $w={48} aria-label="Copilot"><CopilotIcon /></IconButton>
      </Toolbar>

      <Bookmarks>
        <BookmarkList>
          {bookmarks.map((b) => (
            <li key={b.label}><Bookmark href="#" $w={b.w}>{b.icon}{b.label}</Bookmark></li>
          ))}
        </BookmarkList>
        <IconButton $w={40} aria-label="More bookmarks"><svg width="9" height="16" viewBox="0 0 9 16" fill="none" stroke="#eee" strokeWidth="1.600"><path d="M1 1l7 7-7 7" /></svg></IconButton>
        <Divider $m={8} />
        <OtherFavorites href="#"><FolderIcon />Other favorites</OtherFavorites>
      </Bookmarks>

      <Viewport>
        <Page>
          <SiteHeader>
            <Brand href="#">MentalWell</Brand>
            <nav><Menu>{menu.map((m) => <li key={m}><MenuLink href="#">{m}</MenuLink></li>)}</Menu></nav>
          </SiteHeader>
          <Contact>
            <Container>
              <Intro>
                <h2>Talk To Us</h2>
                <p>We'd love to hear from you! Whether you have questions, feedback,<br />or just want to say hello, our friendly team is here to help.</p>
              </Intro>
              <Details>
                <h3>Keep in touch</h3>
                <p>Bhopal, Madhya Pradesh, India – 462001</p>
                <p>
                  <MailLine><LoveLetterIcon />Email us:</MailLine>
                  <a href="#">vivekaryan4236@gmail.com@mentalwell.ai</a>
                </p>
              </Details>
              <Form>
                <Field aria-label="Full Name" placeholder="Full Name" />
                <Field aria-label="E-Mail Address" type="email" placeholder="E-Mail Address" />
                <Message aria-label="Your Message" placeholder="Your Message" />
                <Submit type="button">Send Message</Submit>
              </Form>
            </Container>
          </Contact>
          <Footer>{socials.map((s) => <SocialLink key={s} href="#" aria-label={s} />)}</Footer>
        </Page>
        <Scrollbar>
          <svg width="13" height="10" viewBox="0 0 13 10"><path d="M5.500.8a1.200 1.200 0 0 1 2 0l5 7.500c.5.800 0 1.700-1 1.700h-10c-1 0-1.500-.9-1-1.700z" fill="#9f9f9f" /></svg>
          <Thumb />
          <svg width="13" height="10" viewBox="0 0 13 10"><path d="M5.500 9.200a1.200 1.200 0 0 0 2 0l5-7.500c.5-.8 0-1.700-1-1.700h-10c-1 0-1.500.9-1 1.700z" fill="#9f9f9f" /></svg>
        </Scrollbar>
      </Viewport>

      <Taskbar>
        <Weather>
          <WeatherIcon><RainIcon /><Count>9+</Count></WeatherIcon>
          <span>Rain warning<small>In effect</small></span>
        </Weather>
        <Apps>
          <AppButton aria-label="Start"><WindowsIcon /></AppButton>
          <SearchBox><SearchIcon /><input aria-label="Search" placeholder="Search" /><CometIcon /></SearchBox>
          <AppButton aria-label="Task view"><TaskViewIcon /></AppButton>
          <AppButton aria-label="Brave"><BraveIcon /></AppButton>
          <AppButton $active aria-label="Edge"><EdgeIcon /></AppButton>
          <AppButton aria-label="Chrome"><ChromeIcon /></AppButton>
          <AppButton $open aria-label="File Explorer"><ExplorerIcon /></AppButton>
          <AppButton $open aria-label="Chrome profile"><ChromeIcon /><ProfileBadge>V</ProfileBadge></AppButton>
          <AppButton $open aria-label="Code"><CodeIcon /></AppButton>
        </Apps>
        <Tray>
          <IconButton $w={40} aria-label="Hidden icons"><svg width="14" height="9" viewBox="0 0 14 9" fill="none" stroke="#fff" strokeWidth="1.800"><path d="M1 8l6-6 6 6" /></svg></IconButton>
          <IconButton $w={40} aria-label="Updates"><SyncIcon /></IconButton>
          <Language>ENG<br />IN</Language>
          <Status aria-label="Quick settings"><WifiIcon /><VolumeIcon /><BatteryIcon /></Status>
          <Clock>17:32<br />30-06-2025</Clock>
        </Tray>
      </Taskbar>
    </Desktop>
  );
}
